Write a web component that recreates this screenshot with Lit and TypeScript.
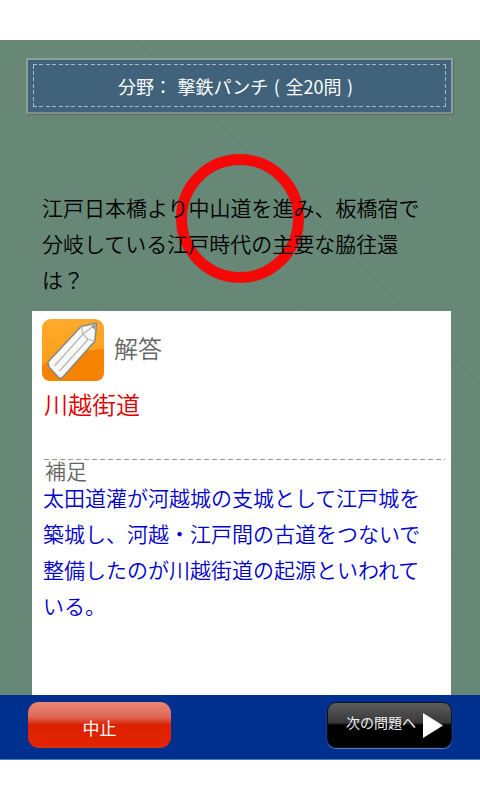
import { LitElement, html, css } from "lit";
import { customElement } from "lit/decorators.js";

@customElement("app-root")
export class AppRoot extends LitElement {
  static styles = css`
    :host {
      display: flex;
      flex-direction: column;
      width: 480px;
      height: 800px;
      background: #fff;
      font-family: "Noto Sans CJK JP", "Liberation Sans", sans-serif;
      font-weight: 350;
      overflow: hidden;
    }
    .top, .bottom { height: 40px; flex: none; background: #fff; }
    .main {
      position: relative;
      flex: none;
      height: 655px;
      box-sizing: border-box;
      padding: 18px 27px 0 26px;
      overflow: hidden;
      display: flex;
      flex-direction: column;
      background-color: #678876;
      background-image: repeating-linear-gradient(45deg, #6a8b79 0 1.4px, #648573 1.4px 2.8px);
    }
    .banner {
      flex: none;
      height: 56px;
      box-sizing: border-box;
      border: 2px solid #8f9f9a;
      border-bottom-color: #7f8f8a;
      background: #40627a;
      padding: 4px 5px 5px;
      box-shadow: 1px 1px 1px #5a6f66;
    }
    .stitch {
      height: 100%;
      box-sizing: border-box;
      display: flex;
      align-items: center;
      justify-content: center;
      color: #fff;
      font-size: 18px;
      font-weight: 400;
      line-height: 24px;
      white-space: pre;
      word-spacing: 1.5px;
      padding-right: 8px;
      background-image:
        repeating-linear-gradient(90deg, #a9bcc6 0 4px, transparent 4px 6.4px),
        repeating-linear-gradient(90deg, #a9bcc6 0 4px, transparent 4px 6.4px),
        repeating-linear-gradient(0deg, #a9bcc6 0 4px, transparent 4px 6.4px),
        repeating-linear-gradient(0deg, #a9bcc6 0 4px, transparent 4px 6.4px);
      background-size: 100% 1px, 100% 1px, 1px 100%, 1px 100%;
      background-position: 0 0, 0 100%, 0 0, 100% 0;
      background-repeat: no-repeat;
    }
    .ring {
      position: absolute;
      left: 176px;
      top: 114px;
      width: 128px;
      height: 129px;
    }
    .question {
      position: relative;
      margin: 75px 0 0 16px;
      height: 108px;
      width: 380px;
      font-size: 21px;
      line-height: 36px;
      color: #000;
    }
    .card {
      flex: none;
      margin: 14px 0 0 6px;
      width: 419px;
      height: 390px;
      background: #fff;
      box-sizing: border-box;
      padding: 8px 0 0 10px;
    }
    .head { display: flex; align-items: center; gap: 10px; height: 62px; }
    .icon { width: 62px; height: 62px; display: block; }
    .label { font-size: 24px; line-height: 32px; color: #666; margin-top: -4px; }
    .answer {
      margin: 5px 0 0 2px;
      font-size: 24px;
      line-height: 36px;
      color: #e00000;
    }
    .sep {
      margin: 37px 6px 0 2px;
      height: 1px;
      background-image: repeating-linear-gradient(90deg, #999 0 5px, transparent 5px 8px);
    }
    .note {
      margin: -1px 0 0 3px;
      font-size: 21px;
      line-height: 22px;
      color: #666;
    }
    .explain {
      margin: -2px 0 0 1px;
      width: 380px;
      font-size: 21px;
      line-height: 36px;
      color: #0000cc;
    }
    .bar {
      flex: none;
      height: 65px;
      box-sizing: border-box;
      background: #00308f;
      border-bottom: 1px solid #4a78b0;
      display: flex;
      justify-content: space-between;
      padding: 7px 28px 0 28px;
    }
    .btn {
      box-sizing: border-box;
      height: 46px;
      display: flex;
      align-items: center;
      justify-content: center;
      color: #fff;
      font-weight: 400;
    }
    .stop {
      width: 143px;
      border-radius: 11px;
      background: linear-gradient(#ec8674 0%, #dd6a58 32%, #dc2000 50%, #e42400 96%, #c83a20 100%);
      font-size: 17px;
      padding-top: 4px;
    }
    .next {
      width: 125px;
      border-radius: 9px;
      border: 1px solid #0a1020;
      background: linear-gradient(#5c5c5c 0%, #383838 45%, #000 50%, #000 100%);
      box-shadow: 0 1px 1px #6a80b0;
      font-size: 14px;
      gap: 7px;
      justify-content: flex-start;
      padding: 0 0 0 18px;
      color: #f2f2f2;
    }
    .next span { margin-top: -6px; }
    .tri { width: 20px; height: 25px; display: block; flex: none; }
  `;

  render() {
    return html`
      <div class="top"></div>
      <div class="main">
        <div class="banner">
          <div class="stitch">分野： 撃鉄パンチ ( 全20問 )</div>
        </div>
        <svg class="ring" viewBox="0 0 128 129">
          <ellipse cx="64" cy="64.5" rx="58.5" ry="59" fill="none" stroke="#f40808" stroke-width="11" />
        </svg>
        <div class="question">江戸日本橋より中山道を進み、板橋宿で分岐している江戸時代の主要な脇往還は？</div>
        <div class="card">
          <div class="head">
            <svg class="icon" viewBox="0 0 62 62">
              <defs>
                <linearGradient id="o" x1="0" y1="0" x2="0" y2="1">
                  <stop offset="0" stop-color="#ffa92c" />
                  <stop offset="1" stop-color="#fb9a10" />
                </linearGradient>
              </defs>
              <rect width="62" height="62" rx="9" fill="url(#o)" />
              <path d="M0 46 Q28 32 62 30 L62 53 Q62 62 53 62 L9 62 Q0 62 0 53Z" fill="#f58200" />
              <path d="M54.5 4 L39 7.5 L6 43 L7 48 L17 59 L20 59 L53 22 Z" fill="#f8f8f8" stroke="#8a8a80" stroke-width="1.6" stroke-linejoin="round" />
              <path d="M39 7.5 L41 15 L46 20.5 L53 22 M41 15 L12.5 47 M46 20.5 L17.5 52 M41 15 L54 5" fill="none" stroke="#b8b8b0" stroke-width="1.2" />
              <path d="M54 5 L49 7 L52.5 11 Z" fill="#999" />
            </svg>
            <div class="label">解答</div>
          </div>
          <div class="answer">川越街道</div>
          <div class="sep"></div>
          <div class="note">補足</div>
          <div class="explain">太田道灌が河越城の支城として江戸城を築城し、河越・江戸間の古道をつないで整備したのが川越街道の起源といわれている。</div>
        </div>
      </div>
      <div class="bar">
        <div class="btn stop">中止</div>
        <div class="btn next">
          <span>次の問題へ</span>
          <svg class="tri" viewBox="0 0 20 25"><path d="M0 0 L20 12.5 L0 25Z" fill="#fff" /></svg>
        </div>
      </div>
      <div class="bottom"></div>
    `;
  }
}
